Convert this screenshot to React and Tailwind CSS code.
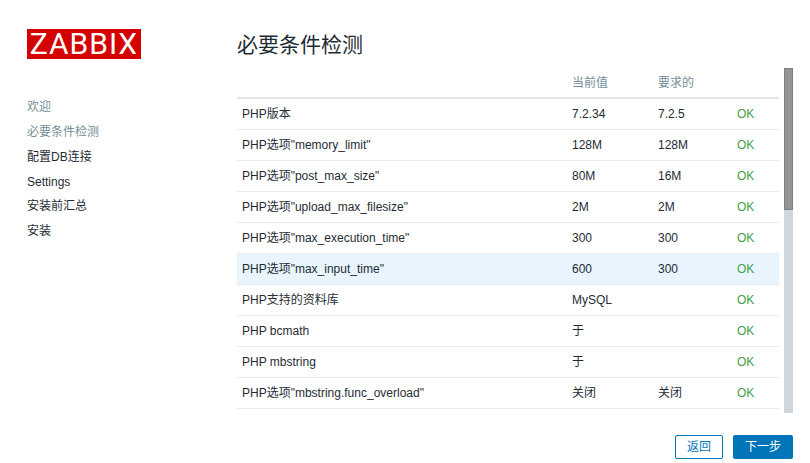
const font = { fontFamily: '"Liberation Sans", "Noto Sans CJK SC", sans-serif' }

const steps = [
  { label: '欢迎', done: true },
  { label: '必要条件检测', done: true },
  { label: '配置DB连接' },
  { label: 'Settings' },
  { label: '安装前汇总' },
  { label: '安装' },
]

const rows = [
  { name: 'PHP版本', current: '7.2.34', required: '7.2.5' },
  { name: 'PHP选项"memory_limit"', current: '128M', required: '128M' },
  { name: 'PHP选项"post_max_size"', current: '80M', required: '16M' },
  { name: 'PHP选项"upload_max_filesize"', current: '2M', required: '2M' },
  { name: 'PHP选项"max_execution_time"', current: '300', required: '300' },
  { name: 'PHP选项"max_input_time"', current: '600', required: '300', active: true },
  { name: 'PHP支持的资料库', current: 'MySQL', required: '' },
  { name: 'PHP bcmath', current: '于', required: '' },
  { name: 'PHP mbstring', current: '于', required: '' },
  { name: 'PHP选项"mbstring.func_overload"', current: '关闭', required: '关闭' },
]

const Row = ({ name, current, required, active }) => (
  <div className={`flex h-[31px] items-center border-b border-[#e9ecee] text-[12px] text-[#1f2c33] ${active ? 'bg-[#e8f5ff]' : ''}`}>
    <div className="w-[335px] pl-[5px]">{name}</div>
    <div className="w-[86px]">{current}</div>
    <div className="w-[79px]">{required}</div>
    <div className="text-[#429e47]">OK</div>
  </div>
)

export default function App() {
  return (
    <div style={font} className="flex h-[463px] w-[810px] overflow-hidden bg-white">
      <aside className="w-[237px] shrink-0 pl-[27px] pt-[29px]">
        <div className="flex h-[30px] w-[114px] items-center justify-center bg-[#d40000] font-['Roboto'] text-[30px] font-normal leading-none tracking-[1px] text-white">
          ZABBIX
        </div>
        <ul className="mt-[35.75px] text-[12px]">
          {steps.map((step) => (
            <li key={step.label} className={`flex h-[24.8px] items-center ${step.done ? 'text-[#768d99]' : 'text-[#1f2c33]'}`}>
              {step.label}
            </li>
          ))}
        </ul>
      </aside>

      <main className="flex-1">
        <h1 className="pt-[31px] text-[21px] leading-[28px] text-[#1f2c33]">必要条件检测</h1>
        <div className="mt-[9px] flex gap-[5px]">
          <div className="w-[542px]">
            <div className="flex h-[31px] items-center border-b-2 border-[#dfe4e7] text-[12px] text-[#768d99]">
              <div className="w-[335px]" />
              <div className="w-[86px]">当前值</div>
              <div>要求的</div>
            </div>
            {rows.map((row) => (
              <Row key={row.name} {...row} />
            ))}
          </div>
          <div className="h-[345px] w-[9px] bg-[#cfd6dc]">
            <div className="h-[142px] border border-[#7f7f7f] bg-[#949494]" />
          </div>
        </div>
        <div className="mt-[22px] flex justify-end gap-[10px] pr-[17px]">
          <button className="h-[24px] w-[48px] rounded-[2px] border border-[#0275b8] bg-white text-[12px] text-[#0275b8]">返回</button>
          <button className="h-[24px] w-[60px] rounded-[2px] bg-[#0275b8] text-[12px] text-white">下一步</button>
        </div>
      </main>
    </div>
  )
}
